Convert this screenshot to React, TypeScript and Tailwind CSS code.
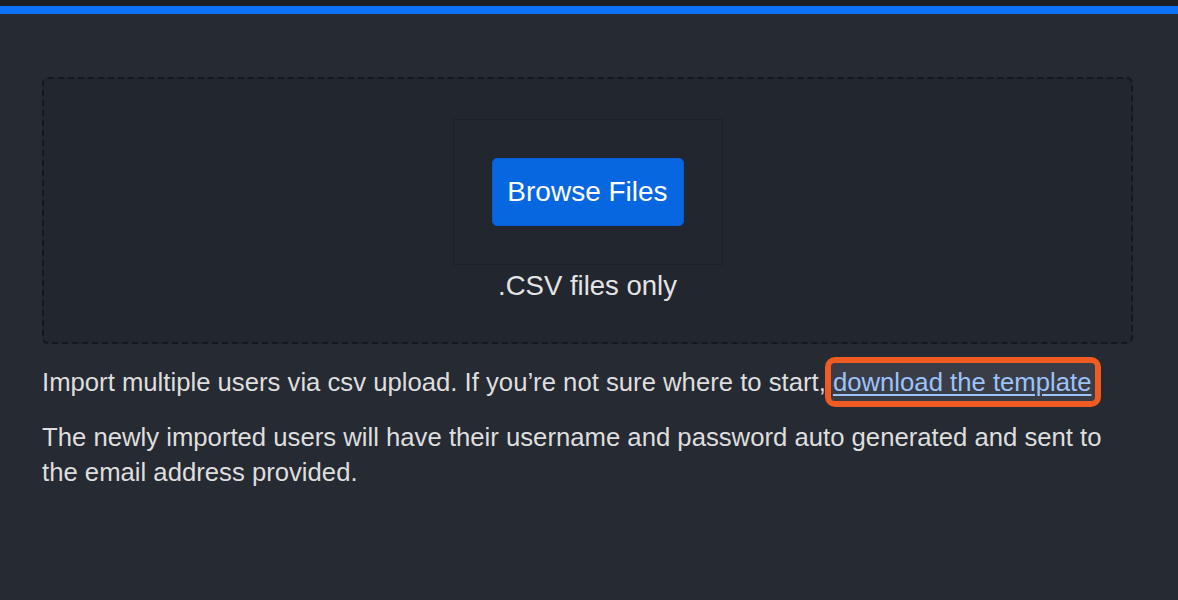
import React from 'react';

const font = { fontFamily: '"Liberation Sans", Arial, sans-serif' };

const UploadBox = () => (
  <div className="flex flex-col items-center rounded-[6px] border-2 border-dashed border-[#14171d] bg-[#22262f] pt-[40px] pb-[40px]">
    <div className="border border-[#1d2028] p-[38px]">
      <button className="h-[68px] w-[192px] rounded-[5px] border border-[#0a5bcf] bg-[#0767e1] text-[28px] text-white">
        Browse Files
      </button>
    </div>
    <p className="mt-[5px] text-[27.5px] leading-[32px] text-[#e4e4e4]">.CSV files only</p>
  </div>
);

export default function App() {
  return (
    <div className="min-h-[600px] bg-[#262a33]" style={font}>
      <div className="h-[6px] bg-[#1b1e25]" />
      <div className="h-[8px] bg-[#0d72f7]" />
      <div className="pl-[42px] pr-[45px] pt-[63px]">
        <UploadBox />
        <p className="mt-[21px] text-[25.7px] leading-[35px] text-[#dedede]">
          Import multiple users via csv upload. If you’re not sure where to start,{' '}
          <a
            href="#"
            className="-ml-[2px] rounded-[4px] bg-[#3a3d46] pl-[2px] pr-[4px] py-[5px] text-[#9cc3fb] underline underline-offset-[3px] outline-[6px] outline-solid outline-[#f05a23]"
          >
            download the template
          </a>
        </p>
        <p className="mt-[20px] text-[25.7px] leading-[35px] text-[#dedede]">
          The newly imported users will have their username and password auto generated and sent to the email address provided.
        </p>
      </div>
    </div>
  );
}
